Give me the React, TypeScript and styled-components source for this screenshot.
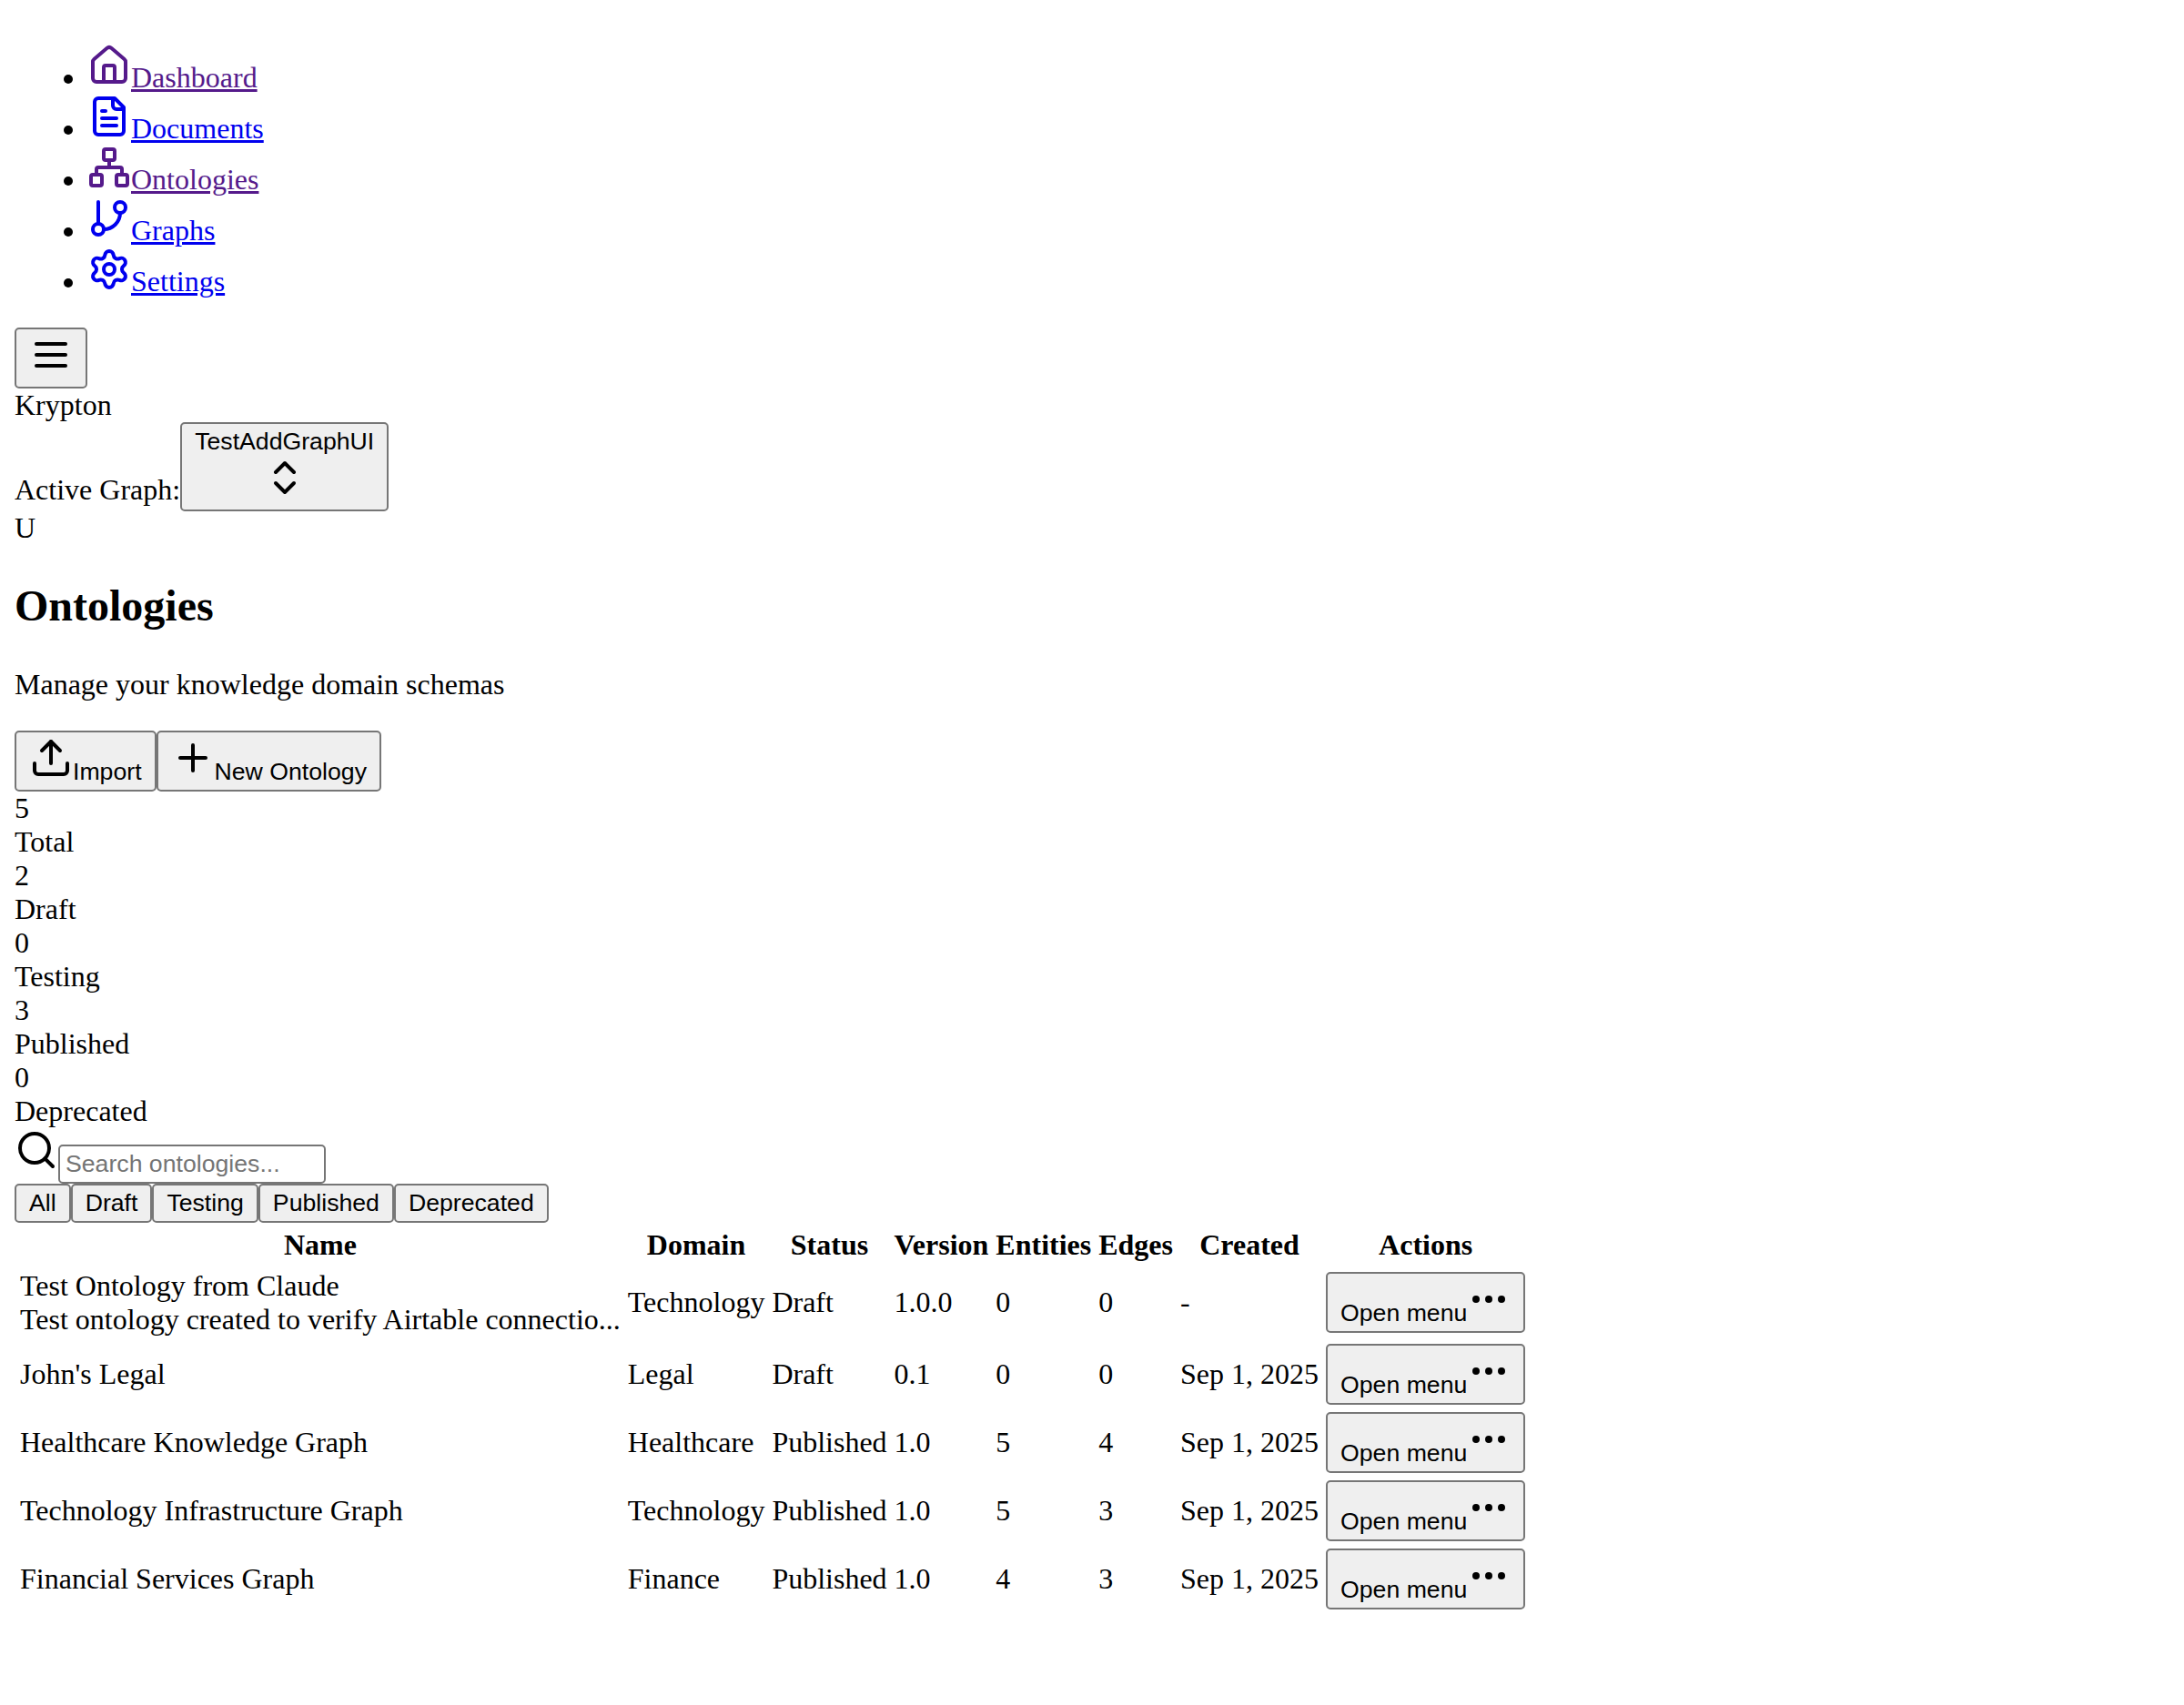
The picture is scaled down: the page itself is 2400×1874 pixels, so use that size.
import React from "react";
import styled, { createGlobalStyle } from "styled-components";
import { House, Network, Settings, ChevronsUpDown, Upload, Plus, Search, Ellipsis } from "lucide-react";

const GlobalStyle = createGlobalStyle`
  body {
    margin: 16px;
    background: #fff;
    color: #000;
    font-family: "Liberation Serif", "Times New Roman", serif;
    font-size: 32px;
    line-height: 37px;
  }
`;

const StrokeIcon = styled.svg.attrs({ viewBox: "0 0 24 24", "aria-hidden": true })`
  width: 48px;
  height: 48px;
  fill: none;
  stroke: currentColor;
  stroke-width: 2;
  stroke-linecap: round;
  stroke-linejoin: round;
`;

const NavList = styled.ul`
  margin: 32px 0;
  padding: 0 0 0 80px;
  list-style: disc;
`;

const NavItem = styled.li`
  height: 56px;
`;

const NavLink = styled.a<{ $visited?: boolean }>`
  color: ${(p) => (p.$visited ? "#551a8b" : "#0000ee")};
  text-decoration: underline;
`;

const Button = styled.button`
  box-sizing: border-box;
  margin: 0;
  padding: 4px 14px;
  border: 2px solid #767676;
  border-radius: 5px;
  background: #efefef;
  color: #000;
  font-family: "Liberation Sans", Arial, sans-serif;
  font-size: 26.667px;
  line-height: 31px;
`;

const ButtonLabel = styled.span`
  display: block;
`;

const Row = styled.div``;

const ButtonRow = styled.div`
  display: flex;
`;

const Title = styled.h2`
  margin: 39px 0 41px;
  font-size: 48px;
  line-height: 55px;
  font-weight: bold;
`;

const Subtitle = styled.p`
  margin: 32px 0;
`;

const SearchRow = styled.div`
  height: 61px;
`;

const SearchInput = styled.input`
  box-sizing: border-box;
  width: 294px;
  height: 43px;
  margin: 0;
  padding: 2px 6px;
  border: 2px solid #767676;
  border-radius: 5px;
  background: #fff;
  font-family: "Liberation Sans", Arial, sans-serif;
  font-size: 26.667px;

  &::placeholder {
    color: #757575;
    opacity: 1;
  }
`;

const Table = styled.table`
  border-collapse: separate;
  border-spacing: 4px;
`;

const HeadCell = styled.th`
  padding: 2px;
  font-weight: bold;
  text-align: center;
`;

const Cell = styled.td<{ $twoLine?: boolean }>`
  padding: 2px 2px ${(p) => (p.$twoLine ? 3 : 2)}px;
  vertical-align: middle;
  white-space: nowrap;
`;

const FileTextIcon = () => (
  <StrokeIcon>
    <path d="M15 2H6a2 2 0 0 0-2 2v16a2 2 0 0 0 2 2h12a2 2 0 0 0 2-2V7Z" />
    <path d="M14 2v4a2 2 0 0 0 2 2h4" />
    <path d="M10 9H8" />
    <path d="M16 13H8" />
    <path d="M16 17H8" />
  </StrokeIcon>
);

const GitBranchIcon = () => (
  <StrokeIcon>
    <line x1="6" x2="6" y1="3" y2="15" />
    <circle cx="18" cy="6" r="3" />
    <circle cx="6" cy="18" r="3" />
    <path d="M18 9a9 9 0 0 1-9 9" />
  </StrokeIcon>
);

const MenuIcon = () => (
  <StrokeIcon>
    <path d="M4 6h16" />
    <path d="M4 12h16" />
    <path d="M4 18h16" />
  </StrokeIcon>
);

const navItems = [
  { label: "Dashboard", icon: <House size={48} />, visited: true },
  { label: "Documents", icon: <FileTextIcon />, visited: false },
  { label: "Ontologies", icon: <Network size={48} />, visited: true },
  { label: "Graphs", icon: <GitBranchIcon />, visited: false },
  { label: "Settings", icon: <Settings size={48} />, visited: false },
];

const stats = [
  { value: 5, label: "Total" },
  { value: 2, label: "Draft" },
  { value: 0, label: "Testing" },
  { value: 3, label: "Published" },
  { value: 0, label: "Deprecated" },
];

const filters = ["All", "Draft", "Testing", "Published", "Deprecated"];

const columns = ["Name", "Domain", "Status", "Version", "Entities", "Edges", "Created", "Actions"];

interface Ontology {
  name: string;
  description?: string;
  domain: string;
  status: string;
  version: string;
  entities: number;
  edges: number;
  created: string;
}

const ontologies: Ontology[] = [
  {
    name: "Test Ontology from Claude",
    description: "Test ontology created to verify Airtable connectio...",
    domain: "Technology",
    status: "Draft",
    version: "1.0.0",
    entities: 0,
    edges: 0,
    created: "-",
  },
  { name: "John's Legal", domain: "Legal", status: "Draft", version: "0.1", entities: 0, edges: 0, created: "Sep 1, 2025" },
  { name: "Healthcare Knowledge Graph", domain: "Healthcare", status: "Published", version: "1.0", entities: 5, edges: 4, created: "Sep 1, 2025" },
  { name: "Technology Infrastructure Graph", domain: "Technology", status: "Published", version: "1.0", entities: 5, edges: 3, created: "Sep 1, 2025" },
  { name: "Financial Services Graph", domain: "Finance", status: "Published", version: "1.0", entities: 4, edges: 3, created: "Sep 1, 2025" },
];

function OntologyRow({ item }: { item: Ontology }) {
  const twoLine = Boolean(item.description);
  return (
    <tr>
      <Cell>
        <Row>{item.name}</Row>
        {item.description && <Row>{item.description}</Row>}
      </Cell>
      <Cell $twoLine={twoLine}>{item.domain}</Cell>
      <Cell $twoLine={twoLine}>{item.status}</Cell>
      <Cell $twoLine={twoLine}>{item.version}</Cell>
      <Cell $twoLine={twoLine}>{item.entities}</Cell>
      <Cell $twoLine={twoLine}>{item.edges}</Cell>
      <Cell $twoLine={twoLine}>{item.created}</Cell>
      <Cell $twoLine={twoLine}>
        <Button>
          <span>Open menu</span>
          <Ellipsis size={48} />
        </Button>
      </Cell>
    </tr>
  );
}

export default function App() {
  return (
    <>
      <GlobalStyle />
      <nav>
        <NavList>
          {navItems.map(({ label, icon, visited }) => (
            <NavItem key={label}>
              <NavLink href="#" $visited={visited}>
                {icon}
                {label}
              </NavLink>
            </NavItem>
          ))}
        </NavList>
      </nav>
      <header>
        <ButtonRow>
          <Button aria-label="Toggle menu">
            <MenuIcon />
          </Button>
        </ButtonRow>
        <Row>Krypton</Row>
        <Row>
          <span>Active Graph:</span>
          <Button>
            <ButtonLabel>TestAddGraphUI</ButtonLabel>
            <ChevronsUpDown size={48} />
          </Button>
        </Row>
        <Row>U</Row>
      </header>
      <main>
        <Title>Ontologies</Title>
        <Subtitle>Manage your knowledge domain schemas</Subtitle>
        <ButtonRow>
          <Button>
            <Upload size={48} />
            Import
          </Button>
          <Button>
            <Plus size={48} />
            New Ontology
          </Button>
        </ButtonRow>
        {stats.map((s) => (
          <Row key={s.label}>
            <Row>{s.value}</Row>
            <Row>{s.label}</Row>
          </Row>
        ))}
        <SearchRow>
          <Search size={48} />
          <SearchInput placeholder="Search ontologies..." />
        </SearchRow>
        <ButtonRow>
          {filters.map((f) => (
            <Button key={f}>{f}</Button>
          ))}
        </ButtonRow>
        <Table>
          <thead>
            <tr>
              {columns.map((c) => (
                <HeadCell key={c}>{c}</HeadCell>
              ))}
            </tr>
          </thead>
          <tbody>
            {ontologies.map((o) => (
              <OntologyRow key={o.name} item={o} />
            ))}
          </tbody>
        </Table>
      </main>
    </>
  );
}
